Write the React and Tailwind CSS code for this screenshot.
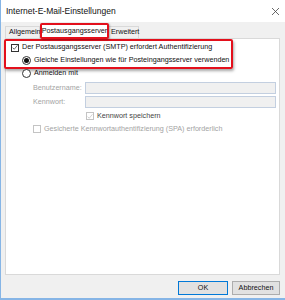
import { useState } from "react";

const font = { fontFamily: '"Liberation Sans", Arial, sans-serif' };

function Box({ checked, disabled }) {
  return (
    <span className={`flex h-[8px] w-[8px] shrink-0 items-center justify-center border bg-white ${disabled ? "border-[#c4c4c4]" : "border-[#333]"}`}>
      {checked && (
        <svg viewBox="0 0 8 8" className="h-[7px] w-[7px]">
          <path d="M0.8 4.2 L3 6.3 L7.3 1" fill="none" stroke={disabled ? "#bdbdbd" : "#222"} strokeWidth="0.9" />
        </svg>
      )}
    </span>
  );
}

function Radio({ on }) {
  return (
    <span className="flex h-[9px] w-[9px] shrink-0 items-center justify-center rounded-full border border-[#333] bg-white">
      {on && <span className="h-[5px] w-[5px] rounded-full bg-[#111]" />}
    </span>
  );
}

export default function App() {
  const [auth] = useState(true);
  return (
    <div className="flex h-[300px] w-[285px] flex-col overflow-hidden whitespace-nowrap border-b-2 border-l border-[#86b5e6] bg-[#f0f0f0] text-[7.2px] text-[#111]" style={font}>
      {/* Title bar */}
      <div className="flex h-[22px] shrink-0 items-center justify-between bg-white pl-[5px] pr-[6px]">
        <span className="text-[8.5px] text-[#111]">Internet-E-Mail-Einstellungen</span>
        <svg viewBox="0 0 7 7" className="h-[7px] w-[7px]">
          <path d="M0 0 L7 7 M7 0 L0 7" stroke="#444" strokeWidth="0.8" />
        </svg>
      </div>

      {/* Tabs */}
      <div className="flex h-[16px] shrink-0 items-end pl-[4px]">
        <div className="flex h-[12px] w-[35px] items-center border border-b-0 border-[#d9d9d9] bg-[#f0f0f0] pl-[3px]">Allgemein</div>
        <div className="relative z-10 -mb-[1px] flex h-[16px] w-[69px] items-center justify-center rounded-[2px] border-2 border-[#e3101c] bg-white shadow-[1px_1px_2px_rgba(0,0,0,0.3)]">Postausgangsserver</div>
        <div className="flex h-[12px] w-[30px] items-center border border-b-0 border-l-0 border-[#d9d9d9] bg-[#f0f0f0] pl-[2px]">Erweitert</div>
      </div>

      {/* Panel */}
      <div className="ml-[4px] flex h-[237px] w-[275px] shrink-0 flex-col border border-[#d9d9d9] bg-white">
        <div className="-ml-[2px] w-[229px] rounded-[2px] border-2 border-[#e3101c] shadow-[1px_2px_3px_rgba(0,0,0,0.35)]">
          <div className="flex h-[13px] items-center gap-[3px] pl-[5px]">
            <Box checked={auth} />
            <span>Der Postausgangsserver (SMTP) erfordert Authentifizierung</span>
          </div>
          <div className="flex h-[13px] items-center gap-[3px] pl-[16px]">
            <Radio on />
            <span>Gleiche Einstellungen wie für Posteingangsserver verwenden</span>
          </div>
        </div>

        <div className="flex h-[9px] items-center gap-[3px] pl-[16px]">
          <Radio />
          <span>Anmelden mit</span>
        </div>

        <div className="mt-[4px] flex h-[12px] items-center pl-[27px] text-[#a3a3a3]">
          <span className="w-[52px]">Benutzername:</span>
          <div className="h-[12px] w-[191px] border border-[#c3cfe0] bg-[#f0f0f0]" />
        </div>
        <div className="mt-[2px] flex h-[12px] items-center pl-[27px] text-[#a3a3a3]">
          <span className="w-[52px]">Kennwort:</span>
          <div className="h-[12px] w-[191px] border border-[#c3cfe0] bg-[#f0f0f0]" />
        </div>

        <div className="mt-[4px] flex h-[8px] items-center gap-[3px] pl-[80px] text-[#444]">
          <Box checked disabled />
          <span>Kennwort speichern</span>
        </div>
        <div className="mt-[5px] flex h-[8px] items-center gap-[3px] pl-[27px] text-[#a3a3a3]">
          <Box disabled />
          <span>Gesicherte Kennwortauthentifizierung (SPA) erforderlich</span>
        </div>
      </div>

      {/* Buttons */}
      <div className="mt-[6px] flex justify-end gap-[4px] pr-[5px]">
        <button className="flex h-[14px] w-[50px] items-center justify-center border border-[#0078d7] bg-[#e1e1e1]">OK</button>
        <button className="flex h-[14px] w-[48px] items-center justify-center border border-[#adadad] bg-[#e1e1e1]">Abbrechen</button>
      </div>
    </div>
  );
}
